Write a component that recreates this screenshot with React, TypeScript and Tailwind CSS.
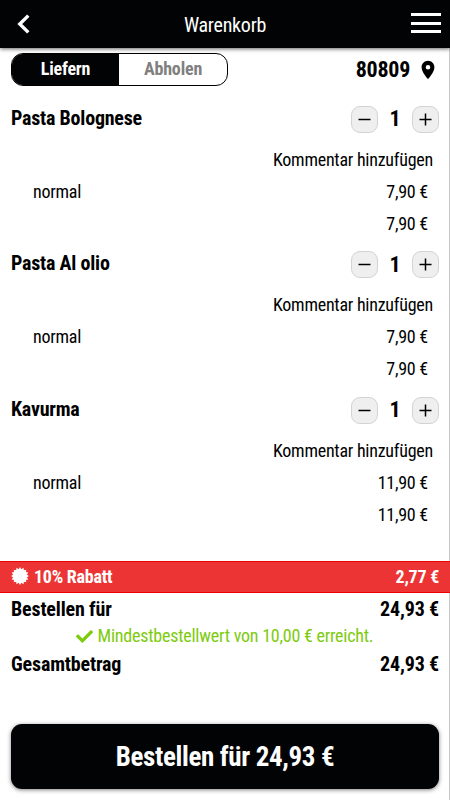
import { FaCheck } from "react-icons/fa";
import { MdLocationOn } from "react-icons/md";

interface ItemType {
  name: string;
  option: string;
  price: string;
}

const Items: ItemType[] = [
  { name: "Pasta Bolognese", option: "normal", price: "7,90 €" },
  { name: "Pasta Al olio", option: "normal", price: "7,90 €" },
  { name: "Kavurma", option: "normal", price: "11,90 €" },
];

// 16 spikes, outer and inner points alternate
const badgePoints = Array.from({ length: 32 }, (_, i) => {
  const r = i % 2 === 0 ? 9 : 7;
  const a = (i * Math.PI) / 16;
  return `${(9 + r * Math.sin(a)).toFixed(2)},${(9 - r * Math.cos(a)).toFixed(2)}`;
}).join(" ");

function BadgeSVG() {
  return (
    <svg width="18" height="18" viewBox="0 0 18 18" fill="currentColor">
      <polygon points={badgePoints} />
    </svg>
  );
}

function Header() {
  return (
    <header className="relative flex h-12 shrink-0 items-center justify-between bg-[#020305] pr-[9px] pl-[17px] text-white shadow-[0_1px_4px_rgba(0,0,0,0.6)]">
      <button aria-label="Zurück" className="pb-px">
        <svg width="13" height="20" viewBox="0 0 13 20" fill="none" stroke="currentColor" strokeWidth="3.4">
          <path d="M11.3 1.6 2.8 10l8.5 8.4" />
        </svg>
      </button>
      <h1 className="ml-[9px] pt-px text-[20px] tracking-[-0.25px]">Warenkorb</h1>
      <button aria-label="Menü" className="flex h-[22px] flex-col justify-between pb-[2px]">
        <span className="h-[3px] w-[30px] bg-white" />
        <span className="h-[3px] w-[30px] bg-white" />
        <span className="h-[3px] w-[30px] bg-white" />
      </button>
    </header>
  );
}

function StepButton({ label, path }: { label: string; path: string }) {
  return (
    <button
      aria-label={label}
      className="flex size-[27px] items-center justify-center rounded-[9px] border border-[#d3d3d3] bg-[#efefef]"
    >
      <svg width="13" height="13" viewBox="0 0 13 13" stroke="black" strokeWidth="1.5">
        <path d={path} />
      </svg>
    </button>
  );
}

function CartItem({ item }: { item: ItemType }) {
  return (
    <div className="h-[145.7px]">
      <div className="flex h-7 items-center justify-between">
        <span className="pb-[3px] text-[20px] font-bold tracking-[-0.22px]">{item.name}</span>
        <div className="flex items-center">
          <StepButton label="Weniger" path="M.5 6.5h12" />
          <span className="w-[34px] text-center text-[22px] font-bold">1</span>
          <StepButton label="Mehr" path="M.5 6.5h12M6.5.5v12" />
        </div>
      </div>
      <div className="mt-[10px] flex h-8 items-center justify-end pt-px pr-[6px]">Kommentar hinzufügen</div>
      <div className="flex h-8 items-center justify-between pt-px pr-[11px] pl-[22px]">
        <span>{item.option}</span>
        <span>{item.price}</span>
      </div>
      <div className="flex h-8 items-center justify-end pt-px pr-[11px]">{item.price}</div>
    </div>
  );
}

function App() {
  return (
    <div className="flex h-[800px] w-[450px] flex-col overflow-hidden bg-white font-['Roboto_Condensed','Roboto',sans-serif] text-[18px] leading-none tracking-[-0.25px] text-black font-stretch-condensed">
      <Header />
      <main className="flex grow flex-col border-r border-[#c8c8c8]">
        <div className="flex items-center justify-between pt-[5px] pr-[13px] pl-[11px]">
          <div className="flex h-[33px] w-[217px] overflow-hidden rounded-[12px] border border-black text-[18px] font-bold tracking-[-0.2px]">
            <button className="w-[107px] bg-[#020305] pb-px text-white">Liefern</button>
            <button className="grow pb-px text-[#808080]">Abholen</button>
          </div>
          <div className="flex items-center gap-[7px] text-[22px] font-bold">
            80809
            <MdLocationOn className="-mr-[3px] size-[22px]" />
          </div>
        </div>
        <div className="mt-[19px] h-[456px] pr-[10px] pl-[11px]">
          {Items.map((item) => (
            <CartItem key={item.name} item={item} />
          ))}
        </div>
        <div className="-mr-px flex h-8 items-center justify-between border-y border-[#f00000] bg-[#ec3434] pr-[11px] pl-[11px] font-bold text-white">
          <span className="flex items-center gap-[5px]">
            <span className="pb-[2px]">
              <BadgeSVG />
            </span>
            10% Rabatt
          </span>
          <span>2,77 €</span>
        </div>
        <div className="flex h-[31px] items-center justify-between pr-[10px] pl-[11px] text-[20px] font-bold tracking-[-0.16px]">
          <span>Bestellen für</span>
          <span>24,93 €</span>
        </div>
        <div className="flex h-6 items-center justify-center gap-[5px] tracking-[-0.23px] text-[#7dcb0d]">
          <FaCheck className="size-[17px]" />
          Mindestbestellwert von 10,00 € erreicht.
        </div>
        <div className="flex h-8 items-center justify-between pr-[10px] pl-[11px] text-[20px] font-bold tracking-[-0.16px]">
          <span>Gesamtbetrag</span>
          <span>24,93 €</span>
        </div>
        <button className="mt-11 mr-[10px] ml-[11px] h-[65px] rounded-[11px] bg-[#020305] pt-px text-[27px] font-bold tracking-[-0.35px] text-white shadow-[0_1px_4px_rgba(0,0,0,0.5)]">
          Bestellen für 24,93 €
        </button>
      </main>
    </div>
  );
}

export default App;
